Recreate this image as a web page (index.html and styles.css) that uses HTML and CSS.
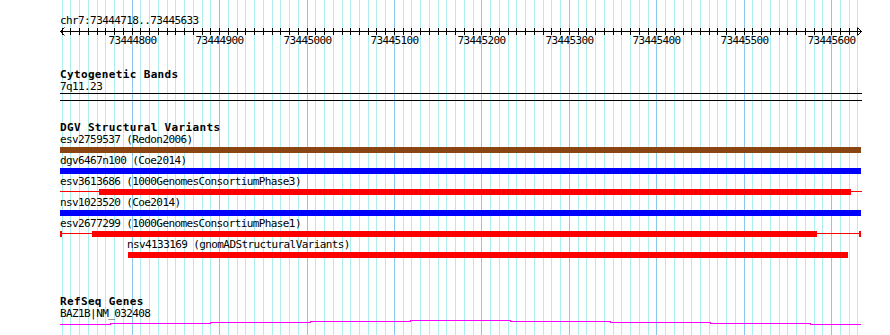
FILE: index.html
```html
<html>
<head>
    <meta charset="utf-8">
    <link rel="stylesheet" href="styles.css">
</head>
    <body>
        <div class="browser">
            <svg id="grid" class="grid" width="890" height="335"></svg>

            <div class="ruler">
                <div class="locus">chr7:73444718..73445633</div>
                <svg id="scale" class="scale" width="890" height="10"></svg>
                <div id="scaleLabels" class="scaleLabels"></div>
            </div>

            <div class="track trkCyto">
                <div class="trkName">Cytogenetic Bands</div>
                <div class="featLabel">7q11.23</div>
                <div class="band"></div>
            </div>

            <div class="track trkDGV">
                <div class="trkName">DGV Structural Variants</div>

                <div class="feat">
                    <div class="featLabel">esv2759537 (Redon2006)</div>
                    <div class="featBar">
                        <div class="thick clrBrown" style="left:60px; width:801px;"></div>
                    </div>
                </div>
                <div class="feat">
                    <div class="featLabel">dgv6467n100 (Coe2014)</div>
                    <div class="featBar">
                        <div class="thick clrBlue" style="left:60px; width:801px;"></div>
                    </div>
                </div>
                <div class="feat">
                    <div class="featLabel">esv3613686 (1000GenomesConsortiumPhase3)</div>
                    <div class="featBar">
                        <div class="thin clrRed" style="left:60px; width:802px;"></div>
                        <div class="thick clrRed" style="left:99px; width:752px;"></div>
                    </div>
                </div>
                <div class="feat">
                    <div class="featLabel">nsv1023520 (Coe2014)</div>
                    <div class="featBar">
                        <div class="thick clrBlue" style="left:60px; width:801px;"></div>
                    </div>
                </div>
                <div class="feat">
                    <div class="featLabel">esv2677299 (1000GenomesConsortiumPhase1)</div>
                    <div class="featBar">
                        <div class="thin clrRed" style="left:60px; width:801px;"></div>
                        <div class="thick clrRed" style="left:60px; width:2px;"></div>
                        <div class="thick clrRed" style="left:92px; width:725px;"></div>
                        <div class="thick clrRed" style="left:859px; width:2px;"></div>
                    </div>
                </div>
                <div class="feat">
                    <div class="featLabel" style="padding-left:127px;">nsv4133169 (gnomADStructuralVariants)</div>
                    <div class="featBar">
                        <div class="thick clrRed" style="left:128px; width:720px;"></div>
                    </div>
                </div>
            </div>

            <div class="track trkGenes">
                <div class="trkName">RefSeq Genes</div>
                <div class="featLabel">BAZ1B|NM_032408</div>
                <svg class="gene" width="890" height="7">
                    <polyline class="geneLine" points="60,5.5 110,5.5 110,4.5 210,4.5 210,3.5 310,3.5 310,2.5 410,2.5 410,1.5 510,1.5 510,2.5 610,2.5 610,3.5 710,3.5 710,4.5 810,4.5 810,5.5 861,5.5"></polyline>
                </svg>
            </div>
        </div>

    <script>
        var startBp = 73444718;
        var x0 = 60;
        var pxPerBp = 0.8743;
        var svgNS = "http://www.w3.org/2000/svg";

        function bpX(bp) {
            return x0 + (bp - startBp) * pxPerBp;
        }

        function addLine(svg, x1, y1, x2, y2, cls) {
            var ln = document.createElementNS(svgNS, "line");
            ln.setAttribute("x1", x1);
            ln.setAttribute("y1", y1);
            ln.setAttribute("x2", x2);
            ln.setAttribute("y2", y2);
            ln.setAttribute("class", cls);
            svg.appendChild(ln);
        }

        function addArrow(svg, pts) {
            var arr = document.createElementNS(svgNS, "polyline");
            arr.setAttribute("points", pts);
            arr.setAttribute("class", "arrow");
            svg.appendChild(arr);
        }

        var grid = document.getElementById("grid");
        var scale = document.getElementById("scale");
        var scaleLabels = document.getElementById("scaleLabels");

        // axis with arrows at both ends
        addLine(scale, 60, 5.5, 862, 5.5, "axis");
        addArrow(scale, "64.5,1.5 60.5,5.5 64.5,9.5");
        addArrow(scale, "857.5,1.5 861.5,5.5 857.5,9.5");

        for (var bp = 73444720; bp <= 73445630; bp += 10) {
            var x = Math.round(bpX(bp)) + 0.5;
            var major = (bp % 100 == 0);
            addLine(grid, x, 0, x, 335, major ? "gMajor" : "gMinor");
            addLine(scale, x, 2, x, 9, "tick");
            if (major) {
                var lbl = document.createElement("span");
                lbl.className = "scaleLbl";
                lbl.style.left = x + "px";
                lbl.innerHTML = bp;
                scaleLabels.append(lbl);
            }
        }
    </script>
    </body>
</html>
```

FILE: styles.css
```css
 body {
     margin: 0;
     background-color: #ffffff;
     font-family: "DejaVu Sans Mono", "Liberation Mono", monospace;
     font-size: 11px;
     letter-spacing: -0.6px;
     color: #000000;
 }
 .browser {
     position: relative;
     width: 890px;
     height: 335px;
     overflow: hidden;
 }
 .grid {
     position: absolute;
     left: 0px;
     top: 0px;
     shape-rendering: crispEdges;
 }
 .gMinor {
     stroke: #aeeeee;
     stroke-width: 1;
 }
 .gMajor {
     stroke: #8cc8ec;
     stroke-width: 1;
 }

 .ruler {
     position: relative;
     padding: 16px 0px 0px 0px;
 }
 .locus {
     height: 10px;
     line-height: 10px;
     padding-left: 60px;
 }
 .scale {
     display: block;
     shape-rendering: crispEdges;
 }
 .axis, .tick, .arrow {
     stroke: #000000;
     stroke-width: 1;
     fill: none;
 }
 .arrow {
     shape-rendering: auto;
 }
 .scaleLabels {
     position: relative;
     height: 10px;
     line-height: 10px;
 }
 .scaleLbl {
     position: absolute;
     top: 0px;
     transform: translateX(-50%);
     white-space: nowrap;
 }

 .track {
     position: relative;
 }
 .trkCyto {
     margin-top: 23px;
 }
 .trkDGV {
     margin-top: 21px;
 }
 .trkGenes {
     margin-top: 35px;
 }
 .trkName {
     height: 11px;
     line-height: 11px;
     padding-left: 60px;
     font-size: 11px;
     font-weight: bold;
     letter-spacing: 0.35px;
     white-space: nowrap;
 }
 .featLabel {
     height: 10px;
     line-height: 10px;
     padding-left: 60px;
     white-space: nowrap;
 }
 .trkName + .featLabel {
     margin-top: 2px;
 }
 .band {
     width: 802px;
     height: 6px;
     margin: 1px 0px 0px 60px;
     border-top: 1px solid #000000;
     border-bottom: 1px solid #000000;
 }

 .trkDGV .trkName {
     margin-bottom: 2px;
 }
 .feat {
     height: 21px;
 }
 .featBar {
     position: relative;
     height: 6px;
     margin-top: 2px;
 }
 .thick {
     position: absolute;
     top: 0px;
     height: 6px;
 }
 .thin {
     position: absolute;
     top: 2px;
     height: 1px;
 }
 .clrBrown {
     background-color: #8b4513;
 }
 .clrBlue {
     background-color: #0000ff;
 }
 .clrRed {
     background-color: #ff0000;
 }

 .gene {
     display: block;
     shape-rendering: crispEdges;
 }
 .geneLine {
     fill: none;
     stroke: #ff00ff;
     stroke-width: 1;
 }
```
